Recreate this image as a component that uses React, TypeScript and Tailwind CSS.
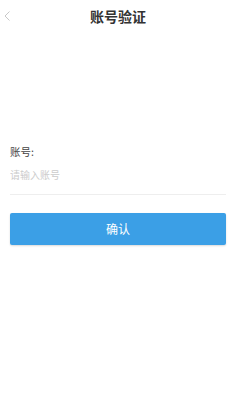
import { useState } from "react";

export default function App() {
  const [account, setAccount] = useState("");

  return (
    <div
      className="w-[236px] h-[420px] bg-white flex flex-col"
      style={{ fontFamily: '"Noto Sans CJK SC", "Liberation Sans", sans-serif' }}
    >
      {/* header */}
      <div className="relative h-[32px] flex items-center justify-center">
        <button className="absolute left-[3px] top-[10px] w-[8px] h-[12px] flex items-center justify-center">
          <svg width="6" height="10" viewBox="0 0 6 10" fill="none">
            <path d="M5.5 0.5L1 5l4.5 4.5" stroke="#c8c8c8" strokeWidth="1" />
          </svg>
        </button>
        <h1 className="text-[14px] font-bold text-[#333] leading-none">账号验证</h1>
      </div>

      {/* form */}
      <div className="px-[10px] mt-[115px]">
        <label className="block text-[10.5px] text-[#444] leading-none">账号:</label>
        <input
          value={account}
          onChange={(e) => setAccount(e.target.value)}
          placeholder="请输入账号"
          className="mt-[6px] w-full h-[22px] text-[10px] text-[#333] placeholder:text-[#cccccc] outline-none"
        />
        <div className="mt-[8px] h-px bg-[#eeeeee]" />
        <button className="mt-[18px] w-full h-[32px] rounded-[2px] bg-[#3b9fe6] text-white text-[12px] shadow-[0_1px_2px_rgba(0,0,0,0.15)]">
          确认
        </button>
      </div>
    </div>
  );
}
